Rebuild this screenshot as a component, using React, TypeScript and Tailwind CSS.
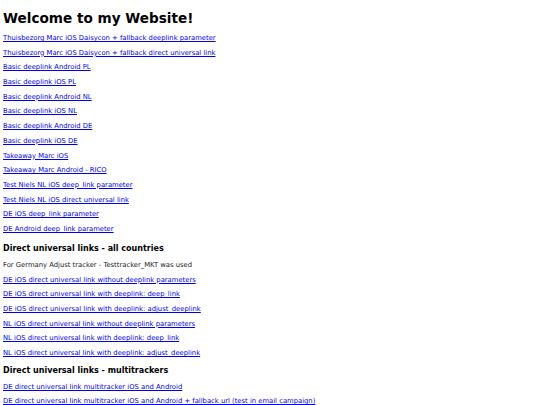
import React from "react";

const topLinks = [
  "Thuisbezorg Marc iOS Daisycon + fallback deeplink parameter",
  "Thuisbezorg Marc iOS Daisycon + fallback direct universal link",
  "Basic deeplink Android PL",
  "Basic deeplink iOS PL",
  "Basic deeplink Android NL",
  "Basic deeplink iOS NL",
  "Basic deeplink Android DE",
  "Basic deeplink iOS DE",
  "Takeaway Marc iOS",
  "Takeaway Marc Android - RICO",
  "Test Niels NL iOS deep_link parameter",
  "Test Niels NL iOS direct universal link",
  "DE iOS deep_link parameter",
  "DE Android deep_link parameter",
];

const countryLinks = [
  "DE iOS direct universal link without deeplink parameters",
  "DE iOS direct universal link with deeplink: deep_link",
  "DE iOS direct universal link with deeplink: adjust_deeplink",
  "NL iOS direct universal link without deeplink parameters",
  "NL iOS direct universal link with deeplink: deep_link",
  "NL iOS direct universal link with deeplink: adjust_deeplink",
];

const multiLinks = [
  "DE direct universal link multitracker iOS and Android",
  "DE direct universal link multitracker iOS and Android + fallback url (test in email campaign)",
];

const LinkRow = ({ label }: { label: string }) => (
  <div className="h-[14.7px] leading-[14.7px]">
    <a href="#" className="text-[#0000ee] underline">
      {label}
    </a>
  </div>
);

export default function App() {
  return (
    <div className="w-[540px] h-[405px] overflow-hidden bg-white px-[3px] text-[6.8px] text-black font-['DejaVu_Sans',sans-serif]">
      <h1 className="h-[31px] pt-[9px] text-[13.6px] font-bold leading-[18px]">
        Welcome to my Website!
      </h1>
      {topLinks.map((l) => (
        <LinkRow key={l} label={l} />
      ))}
      <h2 className="mt-[3px] h-[17px] text-[8px] font-bold leading-[17px]">
        Direct universal links - all countries
      </h2>
      <div className="h-[16px] leading-[16px] text-[#222]">
        For Germany Adjust tracker - Testtracker_MKT was used
      </div>
      {countryLinks.map((l) => (
        <LinkRow key={l} label={l} />
      ))}
      <h2 className="mt-[2px] h-[17px] text-[8px] font-bold leading-[15px]">
        Direct universal links - multitrackers
      </h2>
      {multiLinks.map((l) => (
        <LinkRow key={l} label={l} />
      ))}
    </div>
  );
}
